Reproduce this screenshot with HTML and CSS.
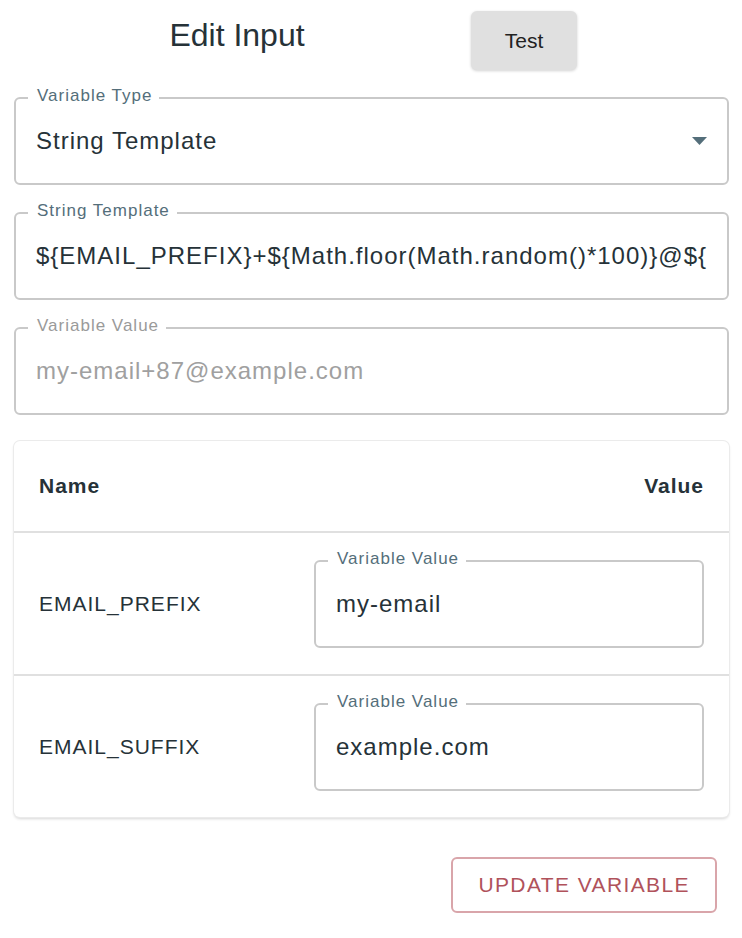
FILE: index.html
```html
<!DOCTYPE html>
<html lang="en">
<head>
<meta charset="utf-8">
<title>Edit Input</title>
<link rel="stylesheet" href="styles.css">
</head>
<body>
<div class="page">
  <header class="header">
    <h1 class="title">Edit Input</h1>
    <button class="test-btn" type="button">Test</button>
  </header>

  <div class="fields">
    <div class="field">
      <span class="field-label">Variable Type</span>
      <span class="field-value">String Template</span>
      <svg class="select-arrow" viewBox="0 0 15 8" aria-hidden="true"><polygon points="0,0 15,0 7.5,8" fill="#546e7a"/></svg>
    </div>
    <div class="field">
      <span class="field-label">String Template</span>
      <span class="field-value">${EMAIL_PREFIX}+${Math.floor(Math.random()*100)}@${</span>
    </div>
    <div class="field disabled">
      <span class="field-label">Variable Value</span>
      <span class="field-value">my-email+87@example.com</span>
    </div>
  </div>

  <div class="card">
    <div class="row head">
      <div class="cell">Name</div>
      <div class="cell right">Value</div>
    </div>
    <div class="row">
      <div class="cell">EMAIL_PREFIX</div>
      <div class="field">
        <span class="field-label">Variable Value</span>
        <span class="field-value">my-email</span>
      </div>
    </div>
    <div class="row">
      <div class="cell">EMAIL_SUFFIX</div>
      <div class="field">
        <span class="field-label">Variable Value</span>
        <span class="field-value">example.com</span>
      </div>
    </div>
  </div>

  <div class="actions">
    <button class="update-btn" type="button">UPDATE VARIABLE</button>
  </div>
</div>
</body>
</html>
```

FILE: styles.css
```css
body {
  margin: 0;
  font-family: "Liberation Sans", Arial, Helvetica, sans-serif;
  color: #263238;
  background: #fff;
}

.page {
  padding: 0 13px 0 14px;
}

.header {
  display: flex;
  align-items: flex-start;
  height: 70px;
}

.title {
  width: 446px;
  margin: 17px 0 0;
  font-size: 32px;
  font-weight: 400;
  line-height: 37px;
  text-align: center;
  color: #263238;
}

.test-btn {
  margin: 11px 0 0 11px;
  width: 106px;
  height: 59px;
  padding: 0;
  border: none;
  border-radius: 6px;
  background: #e0e0e0;
  box-shadow: 0 1px 3px rgba(0, 0, 0, 0.18);
  font-family: inherit;
  font-size: 21px;
  color: #222;
}

.fields {
  display: flex;
  flex-direction: column;
  gap: 27px;
  margin-top: 27px;
}

.field {
  position: relative;
  box-sizing: border-box;
  height: 88px;
  border: 2px solid #c9c9c9;
  border-radius: 6px;
  display: flex;
  align-items: center;
  padding: 0 20px;
}

.field-label {
  position: absolute;
  left: 12px;
  top: -13px;
  padding: 0 7px 0 9px;
  background: #fff;
  font-size: 17px;
  line-height: 20px;
  letter-spacing: 1px;
  color: #546e7a;
  white-space: nowrap;
}

.field-value {
  flex: 1;
  min-width: 0;
  overflow: hidden;
  white-space: nowrap;
  font-size: 24px;
  letter-spacing: 1px;
  color: #263238;
}

.field.disabled .field-label {
  color: #9a9a9a;
}

.field.disabled .field-value {
  color: #a0a0a0;
}

.select-arrow {
  flex: none;
  width: 15px;
  height: 8px;
  margin-left: 10px;
}

.card {
  margin-top: 26px;
  border-radius: 6px;
  background: #fff;
  box-shadow: 0 0 0 1px #ebebeb, 0 2px 3px rgba(0, 0, 0, 0.16);
}

.row {
  display: grid;
  grid-template-columns: 1fr 390px;
  align-items: center;
  height: 141px;
  padding: 0 25px 0 25px;
  border-bottom: 2px solid #e0e0e0;
}

.row:last-child {
  border-bottom: none;
}

.row.head {
  height: 90px;
}

.cell {
  font-size: 21px;
  letter-spacing: 1px;
  color: #263238;
}

.head .cell {
  font-weight: 700;
}

.cell.right {
  text-align: right;
}

.actions {
  display: flex;
  justify-content: flex-end;
  margin-top: 40px;
  padding-right: 12px;
}

.update-btn {
  height: 56px;
  padding: 0 25px;
  border: 2px solid #d9a5aa;
  border-radius: 6px;
  background: #fff;
  color: #b0525b;
  font-family: inherit;
  font-size: 21px;
  letter-spacing: 1.4px;
}
```
